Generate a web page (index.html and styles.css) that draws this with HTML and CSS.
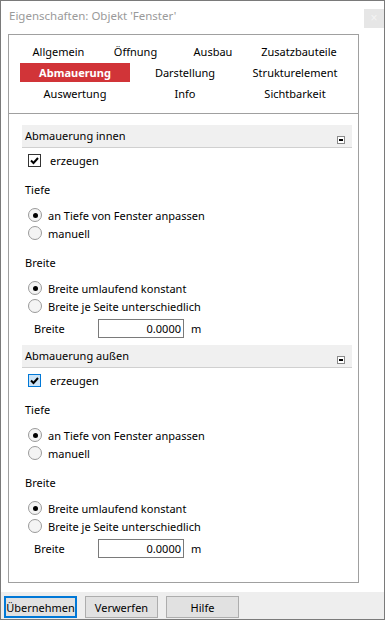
FILE: index.html
```html
<!DOCTYPE html>
<html lang="de">
<head>
  <meta charset="UTF-8" />
  <meta name="viewport" content="width=device-width, initial-scale=1.0" />
  <title>Eigenschaften</title>
  <link rel="stylesheet" href="styles.css">
</head>
<body>
  <div class="window">
    <div class="titlebar">
      <span class="title">Eigenschaften: Objekt 'Fenster'</span>
      <button class="close">&times;</button>
    </div>

    <div class="body">
      <div class="tabs">
        <div class="tab-row four">
          <div class="tab">Allgemein</div>
          <div class="tab">Öffnung</div>
          <div class="tab">Ausbau</div>
          <div class="tab">Zusatzbauteile</div>
        </div>
        <div class="tab-row">
          <div class="tab active">Abmauerung</div>
          <div class="tab">Darstellung</div>
          <div class="tab">Strukturelement</div>
        </div>
        <div class="tab-row">
          <div class="tab">Auswertung</div>
          <div class="tab">Info</div>
          <div class="tab">Sichtbarkeit</div>
        </div>
      </div>

      <div class="content">
        <div class="section">
          <div class="section-head">Abmauerung innen <span class="collapse"></span></div>
          <label class="check-row"><span class="check"><svg width="11" height="11" viewBox="0 0 11 11"><polyline points="2,5.5 4.5,8 9,3" fill="none" stroke="#000" stroke-width="2"/></svg></span>erzeugen</label>
          <div class="label first">Tiefe</div>
          <div class="radio-row"><span class="radio on"></span>an Tiefe von Fenster anpassen</div>
          <div class="radio-row"><span class="radio"></span>manuell</div>
          <div class="label">Breite</div>
          <div class="radio-row"><span class="radio on"></span>Breite umlaufend konstant</div>
          <div class="radio-row"><span class="radio"></span>Breite je Seite unterschiedlich</div>
          <div class="input-row">
            <span class="input-label">Breite</span>
            <span class="input">0.0000</span>
            <span class="unit">m</span>
          </div>
        </div>

        <div class="section">
          <div class="section-head">Abmauerung außen <span class="collapse"></span></div>
          <label class="check-row"><span class="check hover"><svg width="11" height="11" viewBox="0 0 11 11"><polyline points="2,5.5 4.5,8 9,3" fill="none" stroke="#000" stroke-width="2"/></svg></span>erzeugen</label>
          <div class="label first">Tiefe</div>
          <div class="radio-row"><span class="radio on"></span>an Tiefe von Fenster anpassen</div>
          <div class="radio-row"><span class="radio"></span>manuell</div>
          <div class="label">Breite</div>
          <div class="radio-row"><span class="radio on"></span>Breite umlaufend konstant</div>
          <div class="radio-row"><span class="radio"></span>Breite je Seite unterschiedlich</div>
          <div class="input-row">
            <span class="input-label">Breite</span>
            <span class="input">0.0000</span>
            <span class="unit">m</span>
          </div>
        </div>
      </div>
    </div>

    <div class="footer">
      <button class="btn default">Übernehmen</button>
      <button class="btn">Verwerfen</button>
      <button class="btn">Hilfe</button>
    </div>
  </div>
</body>
</html>
```

FILE: styles.css
```css
body {
  margin: 0;
  font-family: 'Noto Sans', sans-serif;
  font-size: 11px;
  color: #000;
  background: #fff;
}
.window {
  width: 385px;
  height: 620px;
  box-sizing: border-box;
  border: 1px solid #7a7a7a;
  background: #fff;
  display: flex;
  flex-direction: column;
}
.titlebar {
  height: 33px;
  display: flex;
  align-items: flex-start;
  justify-content: space-between;
}
.title {
  color: #9a9a9a;
  font-size: 11.5px;
  margin: 7px 0 0 8px;
  line-height: 16px;
}
.close {
  width: 20px;
  height: 19px;
  margin-top: 8px;
  border: none;
  padding: 0;
  background: #e6e6e6;
  color: #f4f4f4;
  font-size: 12px;
  line-height: 19px;
}
.body {
  padding-left: 7px;
  width: 351px;
}
.tabs {
  height: 80px;
  box-sizing: border-box;
  border: 1px solid #a0a0a0;
  padding: 6px 0 0 11px;
}
.tab-row {
  display: grid;
  grid-template-columns: 110px 110px 110px;
  height: 21px;
  align-items: center;
}
.tab-row.four {
  grid-template-columns: 77px 77px 78px 94px;
}
.tab {
  text-align: center;
  line-height: 19px;
}
.tab.active {
  background: #d13438;
  color: #fff;
  font-weight: bold;
}
.content {
  height: 469px;
  box-sizing: border-box;
  border: 1px solid #a0a0a0;
  border-top: none;
  padding: 11px 6px 0 13px;
}
.section {
  display: flex;
  flex-direction: column;
}
.section + .section {
  margin-top: 7px;
}
.section-head {
  height: 22px;
  line-height: 21px;
  background: #f0f0f0;
  border-bottom: 1px solid #d0d0d0;
  padding-left: 3px;
  position: relative;
}
.collapse {
  position: absolute;
  right: 7px;
  top: 11px;
  width: 6px;
  height: 6px;
  border: 1px solid #8a8a8a;
  background: #fff;
}
.collapse::after {
  content: '';
  position: absolute;
  left: 1px;
  top: 2px;
  width: 4px;
  height: 2px;
  background: #000;
}
.check-row {
  height: 24px;
  display: flex;
  align-items: center;
  padding-left: 6px;
}
.check {
  width: 11px;
  height: 11px;
  border: 1px solid #333;
  background: #fff;
  margin-right: 9px;
  display: flex;
}
.check.hover {
  background: #cce4f7;
  border-color: #0078d7;
}
.label {
  height: 20px;
  line-height: 20px;
  padding-left: 3px;
  margin-top: 11px;
  margin-bottom: 6px;
}
.label.first {
  margin-top: 8px;
}
.radio-row {
  height: 18px;
  display: flex;
  align-items: center;
  padding-left: 6px;
}
.radio {
  width: 12px;
  height: 12px;
  border: 1px solid #9a9a9a;
  border-radius: 50%;
  background: #f4f4f4;
  margin-right: 6px;
  position: relative;
}
.radio.on::after {
  content: '';
  position: absolute;
  left: 3.5px;
  top: 3.5px;
  width: 5px;
  height: 5px;
  border-radius: 50%;
  background: #000;
}
.input-row {
  height: 20px;
  display: flex;
  align-items: flex-end;
  margin-top: 3px;
  padding-left: 12px;
}
.input-label {
  width: 64px;
  line-height: 19px;
}
.input {
  width: 82px;
  height: 17px;
  border: 1px solid #7a7a7a;
  text-align: right;
  padding-right: 2px;
  line-height: 17px;
}
.unit {
  margin-left: 7px;
  line-height: 19px;
}
.footer {
  margin-top: 9px;
  flex: 1;
  background: #eeeeee;
  display: flex;
  gap: 8px;
  padding: 4px 0 0 3px;
}
.btn {
  width: 73px;
  height: 22px;
  box-sizing: border-box;
  border: 1px solid #adadad;
  background: #e1e1e1;
  font-family: 'Noto Sans', sans-serif;
  font-size: 11px;
  padding: 0;
  color: #000;
}
.btn.default {
  border: 2px solid #0078d7;
}
```
